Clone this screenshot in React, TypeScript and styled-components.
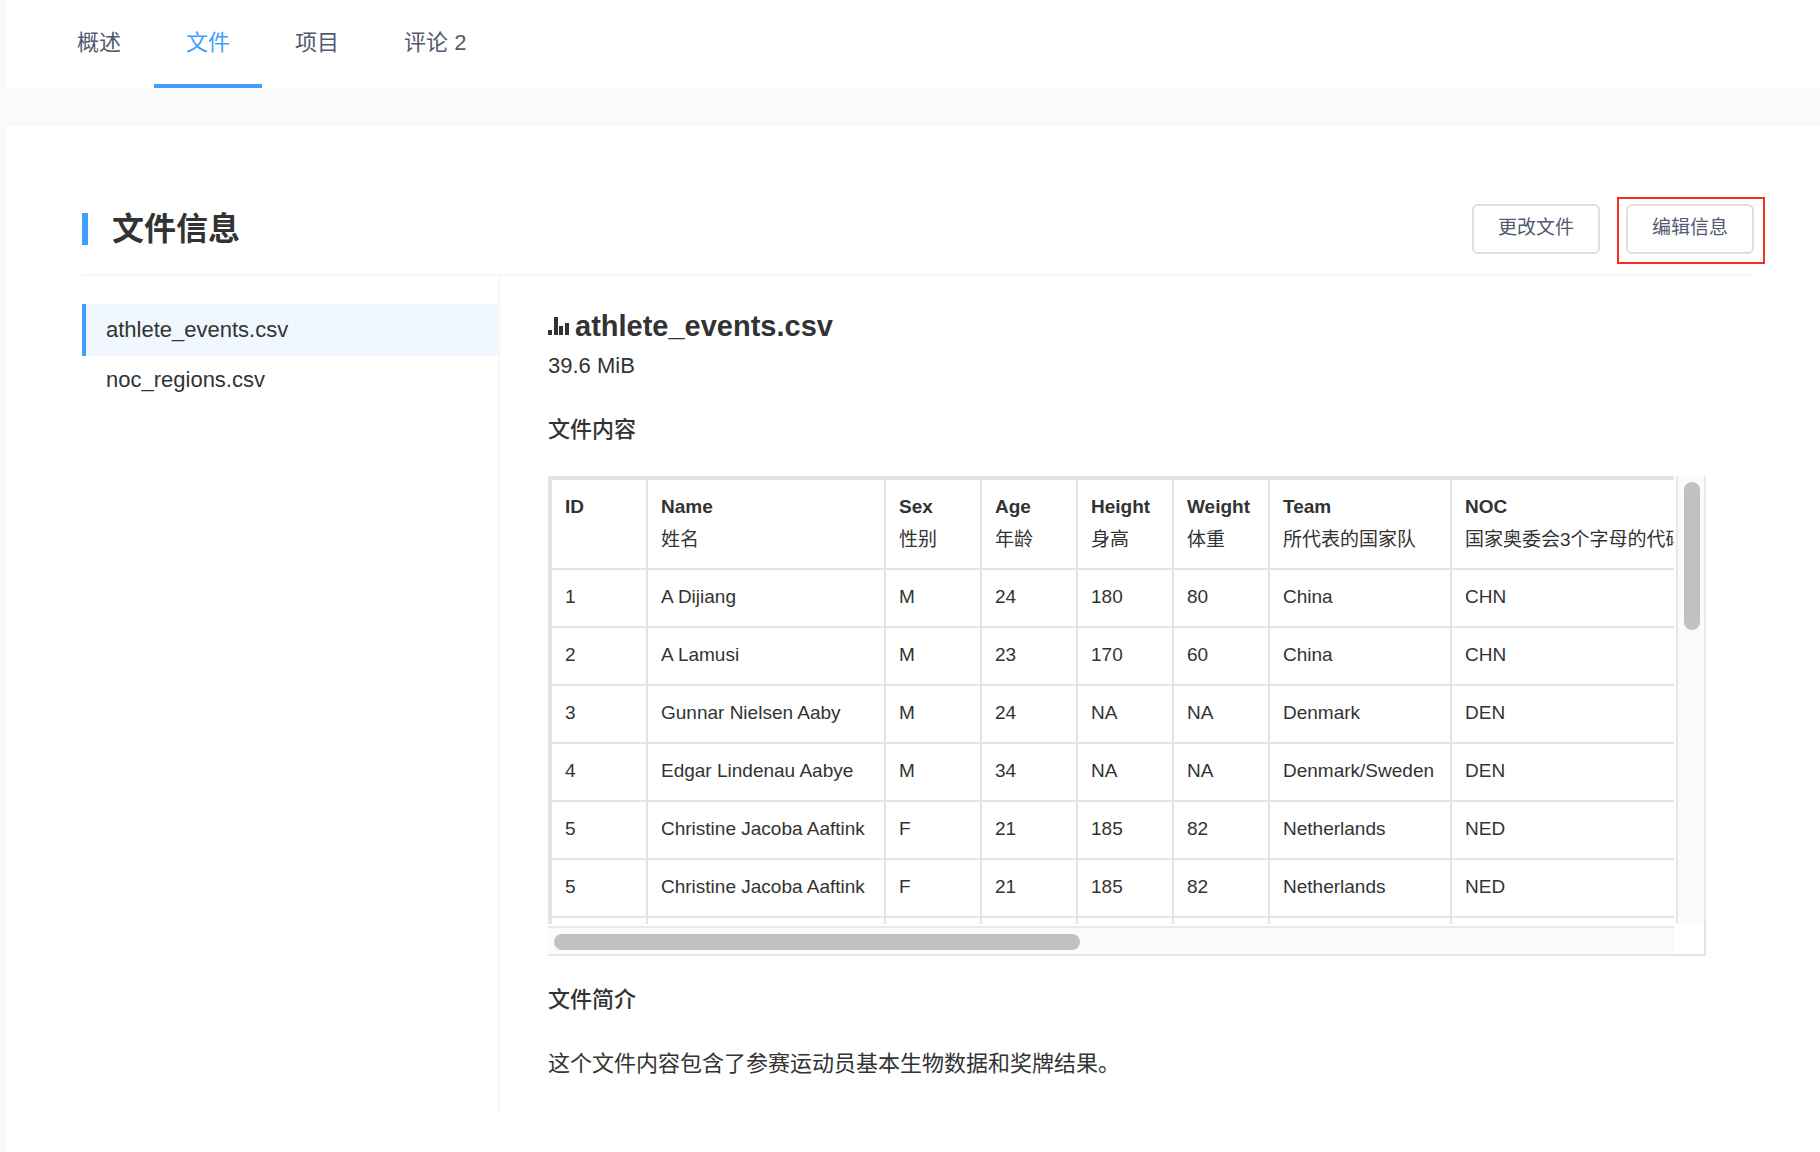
import React from 'react';
import styled, { createGlobalStyle } from 'styled-components';

const GlobalStyle = createGlobalStyle`
  *, *::before, *::after { box-sizing: border-box; }
  body {
    margin: 0;
    background: #f9fbfa;
    color: #333;
    font-family: "Liberation Sans", "Noto Sans CJK SC", sans-serif;
    font-size: 22px;
    line-height: 32px;
  }
  h1, h2, h3, p, ul { margin: 0; padding: 0; }
  a { color: inherit; text-decoration: none; }
`;

const Page = styled.div`
  display: flex;
  flex-direction: column;
  gap: 38px;
  min-height: 100vh;
  padding-left: 6px;
`;

const TabBar = styled.nav`
  display: flex;
  gap: 1px;
  padding-left: 39px;
  background: #fff;
`;

const Tab = styled.a<{ $active?: boolean }>`
  padding: 27px 32px 25px;
  border-bottom: 4px solid ${(p) => (p.$active ? '#409eff' : 'transparent')};
  && { color: ${(p) => (p.$active ? '#409eff' : '#515a6e')}; }
`;

const Card = styled.main`
  flex: 1;
  padding: 78px 66px 38px 76px;
  background: #fff;
`;

const CardHeader = styled.header`
  display: flex;
  align-items: center;
  padding-bottom: 20px;
  border-bottom: 2px solid #f7f7f7;
`;

const Title = styled.h1`
  flex: 1;
  padding-left: 24px;
  border-left: 6px solid #409eff;
  font-size: 32px;
  font-weight: 700;
  line-height: 32px;
`;

const Actions = styled.div`
  display: flex;
  gap: 26px;
`;

const Button = styled.button<{ $marked?: boolean }>`
  position: relative;
  height: 50px;
  padding: 0 24px 2px;
  border: 2px solid #dcdee2;
  border-radius: 6px;
  background: #fff;
  color: #515a6e;
  font: inherit;
  font-size: 19px;

  &::after {
    content: "";
    display: ${(p) => (p.$marked ? 'block' : 'none')};
    position: absolute;
    inset: -9px -13px -12px -11px;
    border: 2px solid #fb2c21;
  }
`;

const Columns = styled.div`
  display: flex;
`;

const FileList = styled.ul`
  flex: 0 0 418px;
  padding-top: 28px;
  border-right: 2px solid #f7f7f7;
  list-style: none;
`;

const FileLink = styled.a<{ $active?: boolean }>`
  display: block;
  padding: ${(p) => (p.$active ? '10px' : '8px')} 20px;
  border-left: 4px solid ${(p) => (p.$active ? '#409eff' : 'transparent')};
  background: ${(p) => (p.$active ? '#f0f7fe' : 'transparent')};
`;

const Detail = styled.section`
  flex: 1;
  min-width: 0;
  padding: 30px 48px 32px;
`;

const FileName = styled.h2`
  display: flex;
  align-items: center;
  gap: 6px;
  margin-bottom: 4px;
  font-size: 29px;
  line-height: 40px;
`;

const FileSize = styled.p`
  margin-bottom: 32px;
`;

const SectionTitle = styled.h3`
  margin-bottom: 30px;
  font-size: 22px;
  font-weight: 500;
`;

const Frame = styled.div`
  display: grid;
  grid-template-columns: minmax(0, 1fr) 32px;
  grid-template-rows: 448px 32px;
  margin-bottom: 28px;
`;

const Viewport = styled.div`
  overflow: hidden;
  border: solid #e4e4e4;
  border-width: 4px 0 0 4px;
`;

const Table = styled.table`
  width: 100%;
  min-width: 1200px;
  table-layout: fixed;
  border-spacing: 0;
  font-size: 19px;
`;

const cell = `
  border: solid #e4e4e4;
  border-width: 0 2px 2px 0;
  text-align: left;
  vertical-align: top;
  white-space: nowrap;
`;

const HeadCell = styled.th`
  ${cell}
  padding: 11px 11px 12px 13px;
`;

const Cell = styled.td`
  ${cell}
  height: 58px;
  padding: 11px 11px 13px 13px;
`;

const Label = styled.span`
  display: block;
  margin-top: 1px;
  font-weight: 400;
`;

const Track = styled.div<{ $vertical?: boolean }>`
  display: flex;
  padding: 6px;
  background: #fafafa;
  border: solid #e8e8e8;
  ${(p) =>
    p.$vertical
      ? 'margin-left: 2px; border-width: 0 2px; padding-inline: 6px 4px;'
      : 'margin-top: 2px; border-width: 2px 0; padding-bottom: 4px;'}
`;

const Thumb = styled.div<{ $vertical?: boolean }>`
  border-radius: 8px;
  background: #c1c1c1;
  ${(p) => (p.$vertical ? 'width: 16px; height: 34%;' : 'width: 47.2%; height: 16px;')}
`;

const Corner = styled.div`
  border: solid #e4e4e4;
  border-width: 0 2px 2px 0;
`;

const Description = styled.p`
  line-height: 36px;
`;

const BarsIcon = () => (
  <svg width="21" height="18" viewBox="0 0 21 18" fill="#333" aria-hidden="true">
    <rect x="0" y="13" width="4" height="5" />
    <rect x="6" y="0" width="4" height="18" />
    <rect x="11" y="9" width="4" height="9" />
    <rect x="17" y="6" width="4" height="12" />
  </svg>
);

const columns = [
  { name: 'ID', label: '', width: 96 },
  { name: 'Name', label: '姓名', width: 238 },
  { name: 'Sex', label: '性别', width: 96 },
  { name: 'Age', label: '年龄', width: 96 },
  { name: 'Height', label: '身高', width: 96 },
  { name: 'Weight', label: '体重', width: 96 },
  { name: 'Team', label: '所代表的国家队', width: 182 },
  { name: 'NOC', label: '国家奥委会3个字母的代码', width: undefined },
];

const rows = [
  ['1', 'A Dijiang', 'M', '24', '180', '80', 'China', 'CHN'],
  ['2', 'A Lamusi', 'M', '23', '170', '60', 'China', 'CHN'],
  ['3', 'Gunnar Nielsen Aaby', 'M', '24', 'NA', 'NA', 'Denmark', 'DEN'],
  ['4', 'Edgar Lindenau Aabye', 'M', '34', 'NA', 'NA', 'Denmark/Sweden', 'DEN'],
  ['5', 'Christine Jacoba Aaftink', 'F', '21', '185', '82', 'Netherlands', 'NED'],
  ['5', 'Christine Jacoba Aaftink', 'F', '21', '185', '82', 'Netherlands', 'NED'],
  ['', '', '', '', '', '', '', ''],
];

export default function App() {
  return (
    <>
      <GlobalStyle />
      <Page>
        <TabBar>
          <Tab href="#overview">概述</Tab>
          <Tab href="#files" $active>文件</Tab>
          <Tab href="#projects">项目</Tab>
          <Tab href="#comments">评论 2</Tab>
        </TabBar>
        <Card>
          <CardHeader>
            <Title>文件信息</Title>
            <Actions>
              <Button type="button">更改文件</Button>
              <Button type="button" $marked>编辑信息</Button>
            </Actions>
          </CardHeader>
          <Columns>
            <FileList>
              <li><FileLink href="#athlete_events" $active>athlete_events.csv</FileLink></li>
              <li><FileLink href="#noc_regions">noc_regions.csv</FileLink></li>
            </FileList>
            <Detail>
              <FileName><BarsIcon />athlete_events.csv</FileName>
              <FileSize>39.6 MiB</FileSize>
              <SectionTitle>文件内容</SectionTitle>
              <Frame>
                <Viewport>
                  <Table>
                    <colgroup>
                      {columns.map((c) => <col key={c.name} width={c.width} />)}
                    </colgroup>
                    <thead>
                      <tr>
                        {columns.map((c) => (
                          <HeadCell key={c.name} scope="col">
                            {c.name}
                            {c.label && <Label>{c.label}</Label>}
                          </HeadCell>
                        ))}
                      </tr>
                    </thead>
                    <tbody>
                      {rows.map((row, i) => (
                        <tr key={i}>
                          {row.map((value, j) => <Cell key={j}>{value}</Cell>)}
                        </tr>
                      ))}
                    </tbody>
                  </Table>
                </Viewport>
                <Track $vertical><Thumb $vertical /></Track>
                <Track><Thumb /></Track>
                <Corner />
              </Frame>
              <SectionTitle>文件简介</SectionTitle>
              <Description>这个文件内容包含了参赛运动员基本生物数据和奖牌结果。</Description>
            </Detail>
          </Columns>
        </Card>
      </Page>
    </>
  );
}
